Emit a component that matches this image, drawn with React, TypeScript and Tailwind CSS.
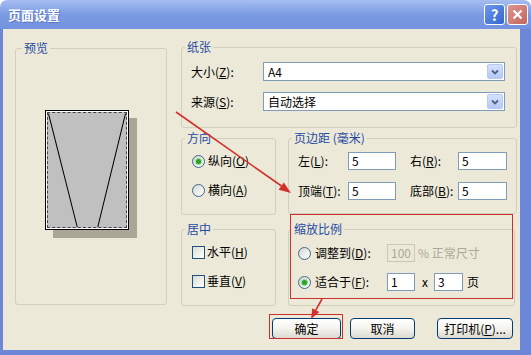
import React from "react";

const font = "font-['Noto_Sans_CJK_SC','Noto_Sans',sans-serif]";

function Acc({ text, k, colon = true }: { text: string; k: string; colon?: boolean }) {
  return (
    <span className="whitespace-nowrap">
      {text}(<span className="underline">{k}</span>){colon ? ":" : ""}
    </span>
  );
}

function Group({
  title,
  className,
  legend = "ml-[-6px]",
  children,
}: {
  title: string;
  className: string;
  legend?: string;
  children?: React.ReactNode;
}) {
  return (
    <fieldset className={`rounded-[3px] border border-[#d0d0bf] px-[9px] ${className}`}>
      <legend className={`px-[2px] text-[12px] leading-[14px] text-[#1f4ba5] ${legend}`}>{title}</legend>
      {children}
    </fieldset>
  );
}

function Radio({ checked }: { checked?: boolean }) {
  return (
    <span className="flex h-[13px] w-[13px] shrink-0 items-center justify-center rounded-full border border-[#3b6790] bg-gradient-to-br from-[#d8d8d0] to-white">
      {checked && <span className="h-[5px] w-[5px] rounded-full bg-[#2ba02b] shadow-[0_0_1px_1px_#8fdc8f]" />}
    </span>
  );
}

function Check() {
  return <span className="h-[13px] w-[13px] shrink-0 border border-[#1c5180] bg-gradient-to-br from-[#dcdcd5] to-white" />;
}

function Input({ value, w, disabled }: { value: string; w: string; disabled?: boolean }) {
  return (
    <span
      className={`flex h-[18px] items-center border pl-[3px] text-[12px] ${w} ${
        disabled ? "border-[#c9c7ba] bg-[#ece9d8] text-[#aca899]" : "border-[#7f9db9] bg-white text-black"
      }`}
    >
      {value}
    </span>
  );
}

function Select({ value }: { value: string }) {
  return (
    <div className="flex h-[19px] w-[242px] items-center border border-[#7f9db9] bg-white pl-[4px] text-[12px]">
      <span>{value}</span>
      <span className="ml-auto mr-px flex h-[15px] w-[16px] items-center justify-center rounded-[2px] border border-[#b6c8f3] bg-gradient-to-b from-[#d5e1fc] to-[#b6c9f6]">
        <svg width="8" height="6" viewBox="0 0 8 6">
          <path d="M1 1.5 L4 4.5 L7 1.5" fill="none" stroke="#4d6185" strokeWidth="1.8" />
        </svg>
      </span>
    </div>
  );
}

function Button({ children, w }: { children: React.ReactNode; w: string }) {
  return (
    <div
      className={`flex h-[21px] items-center justify-center rounded-[4px] border border-[#003c74] bg-gradient-to-b from-white via-[#f4f3ee] to-[#dcdad0] text-[12px] ${w}`}
    >
      {children}
    </div>
  );
}

export default function App() {
  return (
    <div className={`relative h-[355px] w-[531px] overflow-hidden bg-white text-black ${font}`}>
      <div className="flex h-full flex-col">
        {/* title bar */}
        <div className="flex h-[29px] shrink-0 items-center rounded-t-[7px] bg-gradient-to-b from-[#a5bdf0] via-[#7b9ae3] to-[#7393e0] pl-[8px] pr-[3px]">
          <span className="text-[13px] font-bold text-white [text-shadow:1px_1px_0_#5a74c0]">页面设置</span>
          <div className="ml-auto flex gap-[2px]">
            <span className="flex h-[21px] w-[21px] items-center justify-center rounded-[3px] border border-white bg-gradient-to-br from-[#6d98ec] to-[#3464d2] text-[15px] font-bold leading-none text-white">
              ?
            </span>
            <span className="flex h-[21px] w-[21px] items-center justify-center rounded-[3px] border border-white bg-gradient-to-br from-[#dd958d] to-[#c4665f]">
              <svg width="11" height="11" viewBox="0 0 11 11">
                <path d="M1.5 1.5 L9.5 9.5 M9.5 1.5 L1.5 9.5" stroke="white" strokeWidth="2.2" />
              </svg>
            </span>
          </div>
        </div>

        {/* body */}
        <div className="flex flex-1 border-b-[5px] border-l-[3px] border-r-[11px] border-[#6c86d8] bg-[#ece9d8] pl-[12px] pt-[11px]">
          <Group title="预览" legend="ml-[-3px]" className="mt-px h-[264px] w-[152px] shrink-0">
            <div className="mt-[55px] flex justify-center pr-[8px]">
              <div className="h-[120px] w-[84px] border border-black bg-white p-px shadow-[8px_8px_0_#a9a697]">
                <div className="h-full w-full border border-dashed border-[#444] bg-[#c0c0c0]">
                  <svg className="h-full w-full" viewBox="0 0 76 112" preserveAspectRatio="none">
                    <path d="M0.5 0.5 L28.5 112 M75.5 0.5 L48.5 112" stroke="black" strokeWidth="1" fill="none" />
                  </svg>
                </div>
              </div>
            </div>
          </Group>

          <div className="ml-[14px] flex w-[336px] flex-col">
            <Group title="纸张" className="h-[88px] w-[336px]">
              <div className="mt-[8px] grid grid-cols-[72px_242px] items-center gap-y-[11px] text-[12px]">
                <Acc text="大小" k="Z" />
                <Select value="A4" />
                <Acc text="来源" k="S" />
                <Select value="自动选择" />
              </div>
            </Group>

            <div className="mt-[3px] flex gap-[12px]">
              <Group title="方向" className="h-[84px] w-[95px] shrink-0">
                <div className="mt-[8px] flex flex-col gap-[13px] pl-px text-[12px]">
                  <div className="flex h-[16px] items-center gap-[3px]">
                    <Radio checked />
                    <Acc text="纵向" k="O" colon={false} />
                  </div>
                  <div className="flex h-[16px] items-center gap-[3px]">
                    <Radio />
                    <Acc text="横向" k="A" colon={false} />
                  </div>
                </div>
              </Group>
              <Group title="页边距 (毫米)" className="h-[83px] w-[227px] shrink-0">
                <div className="mt-[7px] flex flex-col gap-[12px] text-[12px]">
                  <div className="flex h-[18px] items-center">
                    <span className="w-[50px]"><Acc text="左" k="L" /></span>
                    <Input value="5" w="w-[48px]" />
                    <span className="ml-[14px] w-[48px]"><Acc text="右" k="R" /></span>
                    <Input value="5" w="w-[49px]" />
                  </div>
                  <div className="flex h-[18px] items-center">
                    <span className="w-[50px]"><Acc text="顶端" k="T" /></span>
                    <Input value="5" w="w-[48px]" />
                    <span className="ml-[14px] w-[48px]"><Acc text="底部" k="B" /></span>
                    <Input value="5" w="w-[49px]" />
                  </div>
                </div>
              </Group>
            </div>

            <div className="mt-[7px] flex gap-[12px]">
              <Group title="居中" className="h-[84px] w-[95px] shrink-0">
                <div className="mt-[8px] flex flex-col gap-[13px] pl-px text-[12px]">
                  <div className="flex h-[16px] items-center gap-[2px]">
                    <Check />
                    <Acc text="水平" k="H" colon={false} />
                  </div>
                  <div className="flex h-[16px] items-center gap-[2px]">
                    <Check />
                    <Acc text="垂直" k="V" colon={false} />
                  </div>
                </div>
              </Group>
              <Group title="缩放比例" className="h-[84px] w-[227px] shrink-0">
                <div className="mt-[8px] flex flex-col gap-[11px] text-[12px]">
                  <div className="flex h-[18px] items-center">
                    <Radio />
                    <span className="ml-[4px] w-[72px]"><Acc text="调整到" k="D" /></span>
                    <Input value="100" w="w-[28px]" disabled />
                    <span className="ml-[3px] text-[#aca899]">% 正常尺寸</span>
                  </div>
                  <div className="flex h-[18px] items-center">
                    <Radio checked />
                    <span className="ml-[4px] w-[72px]"><Acc text="适合于" k="F" /></span>
                    <Input value="1" w="w-[28px]" />
                    <span className="ml-[7px] w-[12px]">x</span>
                    <Input value="3" w="w-[29px]" />
                    <span className="ml-[4px]">页</span>
                  </div>
                </div>
              </Group>
            </div>

            <div className="mt-[12px] flex pl-[91px]">
              <Button w="w-[69px]">确定</Button>
              <div className="ml-[9px]">
                <Button w="w-[65px]">取消</Button>
              </div>
              <div className="ml-[22px]">
                <Button w="w-[76px]">
                  打印机(<span className="underline">P</span>)...
                </Button>
              </div>
            </div>
          </div>
        </div>
      </div>

      {/* red annotation marks */}
      <div className="pointer-events-none absolute left-[290px] top-[214px] h-[85px] w-[223px] border border-[#cc2f2c]" />
      <div className="pointer-events-none absolute left-[269px] top-[314px] h-[25px] w-[74px] border border-[#cc2f2c]" />
      <svg className="pointer-events-none absolute left-0 top-0" width="531" height="355" viewBox="0 0 531 355">
        <path d="M176 112 L281.5 186" stroke="#d3302b" strokeWidth="1.6" />
        <path d="M291 193 L278.6 189.8 L283.8 182.4 Z" fill="#d3302b" />
        <path d="M322 299 L315.8 310.2" stroke="#d3302b" strokeWidth="1.6" />
        <path d="M311 319 L312.3 308.3 L319.3 312.1 Z" fill="#d3302b" />
      </svg>
    </div>
  );
}
